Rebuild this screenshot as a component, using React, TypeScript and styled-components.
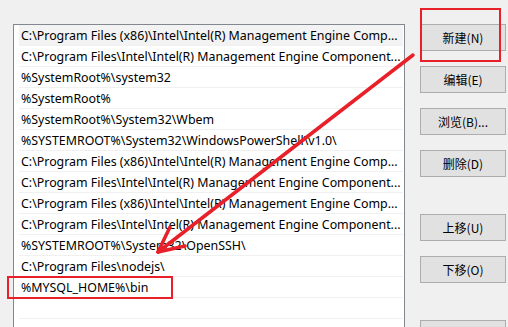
import styled, { createGlobalStyle } from 'styled-components';

const GlobalStyle = createGlobalStyle`
  html, body {
    margin: 0;
    padding: 0;
    background: #f0f0f0;
    overflow: hidden;
  }
  body {
    font-family: "Noto Sans", "Noto Sans CJK SC", sans-serif;
    font-size: 12px;
    color: #000;
  }
`

const Window = styled.div`
  position: relative;
  width: 508px;
  height: 327px;
  overflow: hidden;
  display: flex;
  flex-direction: row;
  align-items: flex-start;
  padding: 24px 0 0 13px;
  box-sizing: border-box;
  gap: 15px;
`

const ListBox = styled.div`
  width: 392px;
  height: 330px;
  flex-shrink: 0;
  background: #fff;
  border: 1px solid #828790;
  box-sizing: border-box;
  display: flex;
  flex-direction: column;
`

const Row = styled.div<{ $hover?: boolean }>`
  height: 21px;
  flex-shrink: 0;
  display: flex;
  align-items: center;
  box-sizing: border-box;
  border-bottom: 1px solid #f0f0f0;
  margin-left: 5px;
  margin-right: 1px;
  padding-left: 2px;
  background: ${p => (p.$hover ? '#f3f3f3' : '#fff')};
  white-space: nowrap;
  overflow: hidden;
  font-size: 12.4px;
`

const Buttons = styled.div`
  display: flex;
  flex-direction: column;
  width: 86px;
`

const Button = styled.div<{ $gap: number }>`
  margin-top: ${p => p.$gap}px;
  height: 27px;
  flex-shrink: 0;
  box-sizing: border-box;
  background: #e1e1e1;
  border: 1px solid #adadad;
  display: flex;
  align-items: center;
  justify-content: center;
  font-family: "Noto Sans CJK SC", sans-serif;
  font-size: 12px;
  color: #000;
`

const Annotation = styled.svg`
  position: absolute;
  left: 0;
  top: 0;
  pointer-events: none;
`

const intelX86 = 'C:\\Program Files (x86)\\Intel\\Intel(R) Management Engine Comp...'
const intel = 'C:\\Program Files\\Intel\\Intel(R) Management Engine Component...'

const paths = [
  intelX86,
  intel,
  '%SystemRoot%\\system32',
  '%SystemRoot%',
  '%SystemRoot%\\System32\\Wbem',
  '%SYSTEMROOT%\\System32\\WindowsPowerShell\\v1.0\\',
  intelX86,
  intel,
  intelX86,
  intel,
  '%SYSTEMROOT%\\System32\\OpenSSH\\',
  'C:\\Program Files\\nodejs\\',
  '%MYSQL_HOME%\\bin',
  '',
  '',
]

const buttons = [
  { label: '新建(N)', gap: 0 },
  { label: '编辑(E)', gap: 15 },
  { label: '浏览(B)...', gap: 15 },
  { label: '删除(D)', gap: 15 },
  { label: '上移(U)', gap: 37 },
  { label: '下移(O)', gap: 15 },
  { label: '', gap: 37 },
]

export default function App() {
  return (
    <>
      <GlobalStyle />
      <Window>
        <ListBox>
          {paths.map((p, i) => (
            <Row key={i} $hover={i === 0}>{p}</Row>
          ))}
        </ListBox>
        <Buttons>
          {buttons.map((b, i) => (
            <Button key={i} $gap={b.gap}>{b.label}</Button>
          ))}
        </Buttons>
        <Annotation width="508" height="327" viewBox="0 0 508 327">
          <rect x="421" y="9" width="79" height="52" fill="none" stroke="#e8202a" strokeWidth="2" />
          <rect x="8" y="277" width="164" height="21" fill="none" stroke="#e8202a" strokeWidth="2" />
          <g stroke="#e8202a" strokeWidth="3.5" strokeLinecap="round" fill="none">
            <line x1="413" y1="55" x2="158" y2="252" />
            <line x1="158" y1="252" x2="170" y2="227" />
            <line x1="158" y1="252" x2="185" y2="246" />
          </g>
        </Annotation>
      </Window>
    </>
  )
}
